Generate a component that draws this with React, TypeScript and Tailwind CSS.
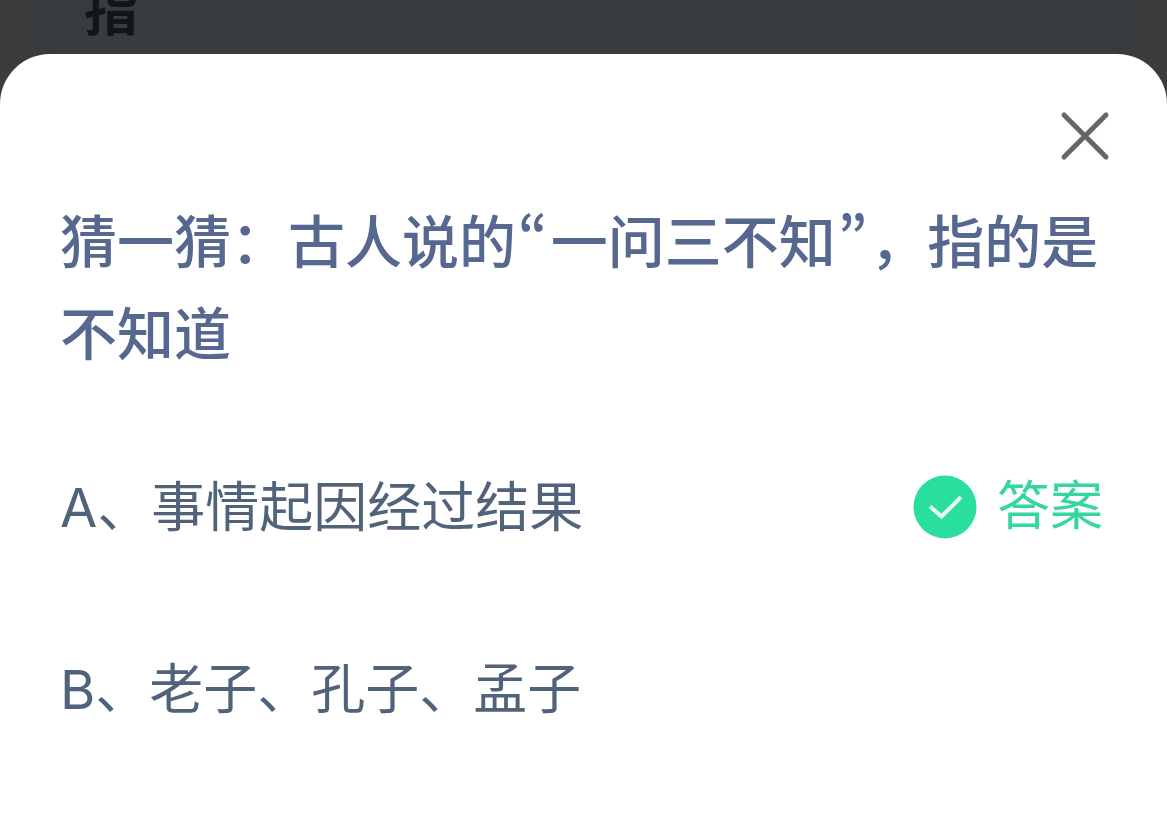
import { useState } from "react";

type Option = {
  key: string;
  text: string;
  correct: boolean;
};

const options: Option[] = [
  { key: "A", text: "事情起因经过结果", correct: true },
  { key: "B", text: "老子、孔子、孟子", correct: false },
];

// narrow curly quote with a little air around it
const Quote: React.FC<{ children: string }> = ({ children }) => {
  return <span className="mr-[3px] ml-[2px] [font-feature-settings:'pwid']">{children}</span>;
};

const AnswerBadge: React.FC = () => {
  return (
    <span className="flex items-center gap-5 text-[53px] text-[#35d6a0]">
      <svg className="size-16" viewBox="0 0 64 64" fill="none" aria-hidden="true">
        <circle cx="32" cy="32" r="31.5" fill="#2adf9d" />
        <path d="M17 31.5 L28.5 41.5 L48 22" stroke="#e9fff6" strokeWidth="4" />
      </svg>
      <span>答案</span>
    </span>
  );
};

const OptionRow: React.FC<{ option: Option }> = ({ option }) => {
  return (
    <li className="flex h-20 items-center justify-between">
      <span>
        {option.key}、{option.text}
      </span>
      {option.correct && <AnswerBadge />}
    </li>
  );
};

const App: React.FC = () => {
  const [open, setOpen] = useState(true);

  return (
    <div className="flex min-h-screen flex-col bg-[#3c3c3c] font-['Inter','Noto_Sans_CJK_SC',sans-serif]">
      {/* dimmed page behind the sheet */}
      <div className="-mb-14 flex h-28 items-start overflow-hidden px-9">
        <div className="flex h-28 w-full items-start bg-[#383b40] px-12">
          <p className="-mt-6 text-[54px] leading-[72px] font-bold text-[#131517]">指</p>
        </div>
      </div>

      {open && (
        <section
          role="dialog"
          aria-labelledby="question"
          className="relative -mt-0.5 flex-1 rounded-t-[50px] bg-white px-15 pt-14"
        >
          <div className="-mr-1 flex justify-end">
            <button type="button" aria-label="关闭" className="size-13" onClick={() => setOpen(false)}>
              <svg viewBox="0 0 52 52" fill="none" aria-hidden="true">
                <path d="M5 5 L47 47 M47 5 L5 47" stroke="#666666" strokeWidth="5" strokeLinecap="round" />
              </svg>
            </button>
          </div>

          <h1
            id="question"
            className="mt-[30px] font-['Noto_Sans_CJK_SC',sans-serif] text-[57px] leading-[92px] font-medium text-[#566790]"
          >
            猜一猜：古人说的<Quote>“</Quote>一问三不知<Quote>”</Quote>，指的是不知道
          </h1>

          <ul className="mt-[91px] flex flex-col gap-[102px] pr-1 text-[54px] text-[#51637a]">
            {options.map((option) => (
              <OptionRow key={option.key} option={option} />
            ))}
          </ul>
        </section>
      )}
    </div>
  );
};

export default App;
